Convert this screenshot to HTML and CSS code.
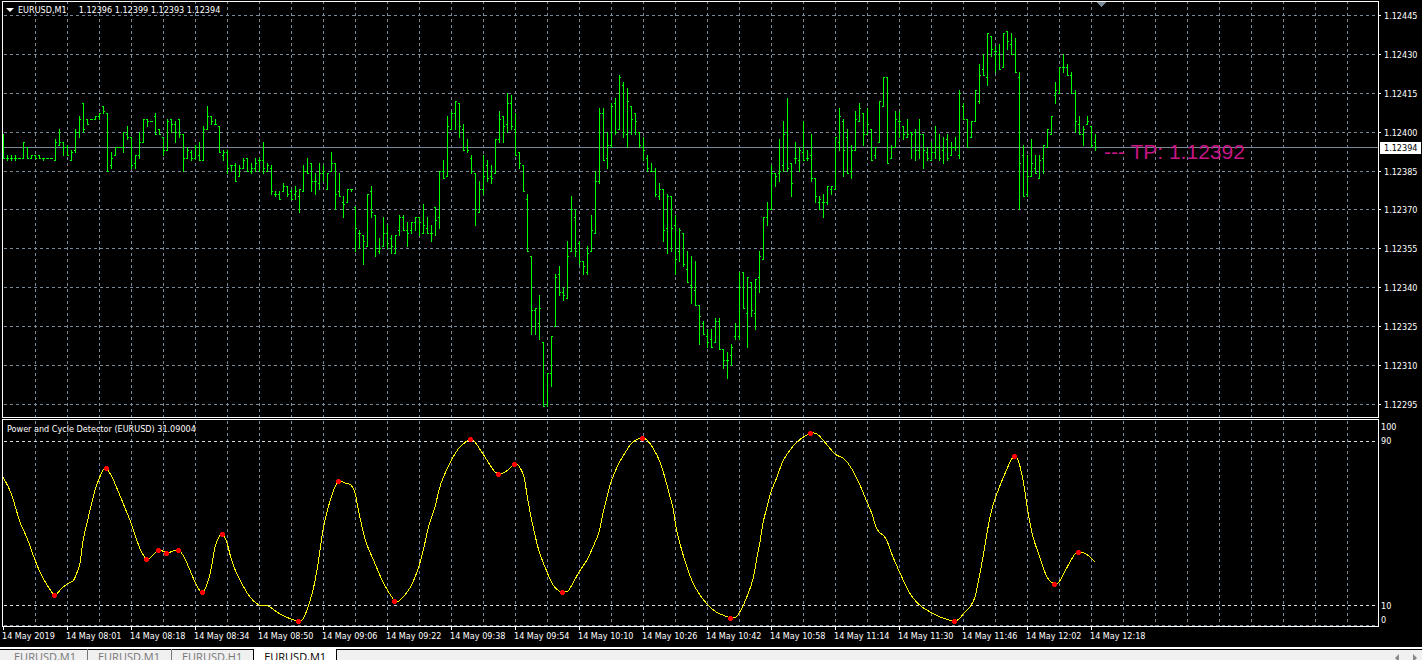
FILE: index.html
```
<!DOCTYPE html>
<html lang="en">
<head>
<meta charset="UTF-8">
<meta name="viewport" content="width=device-width, initial-scale=1.0">
<title>EURUSD,M1</title>
<link rel="stylesheet" href="styles.css">
</head>
<body>

<div class="terminal">
    <div class="charts">
        <div class="pane">
            <div class="plot price-plot">
                <svg class="canvas" id="priceChart" role="img" aria-label="EURUSD M1 bar chart"></svg>
                <div class="pane-title">
                    <svg class="arrow" width="8" height="4" viewBox="0 0 8 4"><path d="M0 0h8L4 4z" fill="#fff"/></svg>
                    <span>EURUSD,M1</span>
                    <span class="quotes">1.12396 1.12399 1.12393 1.12394</span>
                </div>
            </div>
            <div class="scale price-scale">
                <span>1.12445</span>
                <span>1.12430</span>
                <span>1.12415</span>
                <span>1.12400</span>
                <span>1.12385</span>
                <span>1.12370</span>
                <span>1.12355</span>
                <span>1.12340</span>
                <span>1.12325</span>
                <span>1.12310</span>
                <span>1.12295</span>
                <div class="price-tag">1.12394</div>
            </div>
        </div>
        <div class="pane">
            <div class="plot cycle-plot">
                <svg class="canvas" id="cycleChart" role="img" aria-label="Power and Cycle Detector"></svg>
                <div class="pane-title cycle-title">Power and Cycle Detector (EURUSD) 31.09004</div>
            </div>
            <div class="scale cycle-scale">
                <div><span>100</span><span>90</span></div>
                <div><span>10</span><span>0</span></div>
            </div>
        </div>
        <div class="time-scale">
            <span>14 May 2019</span>
            <span>14 May 08:01</span>
            <span>14 May 08:18</span>
            <span>14 May 08:34</span>
            <span>14 May 08:50</span>
            <span>14 May 09:06</span>
            <span>14 May 09:22</span>
            <span>14 May 09:38</span>
            <span>14 May 09:54</span>
            <span>14 May 10:10</span>
            <span>14 May 10:26</span>
            <span>14 May 10:42</span>
            <span>14 May 10:58</span>
            <span>14 May 11:14</span>
            <span>14 May 11:30</span>
            <span>14 May 11:46</span>
            <span>14 May 12:02</span>
            <span>14 May 12:18</span>
        </div>
    </div>
    <div class="tabs">
        <button class="tab">EURUSD,M1</button>
        <button class="tab">EURUSD,M1</button>
        <button class="tab">EURUSD,H1</button>
        <button class="tab active">EURUSD,M1</button>
        <div class="tab-scroll">
            <button aria-label="Previous tab"><svg width="4" height="8" viewBox="0 0 4 8"><path d="M4 0v8L0 4z" fill="#888"/></svg></button>
            <button aria-label="Next tab"><svg width="4" height="8" viewBox="0 0 4 8"><path d="M0 0v8l4-4z" fill="#888"/></svg></button>
        </div>
    </div>
</div>

<script src="chart.js"></script>
</body>
</html>
```
FILE: styles.css
```
body {
    margin: 0;
    background-color: #000;
    color: #fff;
    font-family: "DejaVu Sans Condensed", "Open Sans", sans-serif;
    font-size: 9px;
    line-height: 12px;
}
.terminal {
    display: flex;
    flex-direction: column;
    height: 100vh;
    overflow: hidden;
}
.charts {
    display: flex;
    flex-direction: column;
    flex: none;
    gap: 1px;
    padding: 1px 0 0 2px;
}
.pane {
    display: flex;
}
.plot {
    position: relative;
    flex: 1;
    min-width: 0;
    border: 1px solid #fff;
}
.price-plot {
    height: 415px;
}
.cycle-plot {
    height: 206px;
}
.canvas {
    display: block;
    width: 100%;
    height: 100%;
    shape-rendering: crispEdges;
}
.pane-title {
    position: absolute;
    top: 2px;
    left: 3px;
    display: flex;
    align-items: center;
    white-space: nowrap;
}
.cycle-title {
    top: 3px;
    left: 4px;
}
.arrow {
    margin-right: 4px;
}
.quotes {
    margin-left: 12px;
}
.scale {
    position: relative;
    box-sizing: border-box;
    display: flex;
    flex-direction: column;
    justify-content: space-between;
    width: 43px;
}
.price-scale {
    padding: 9px 0 7px 5px;
}
.price-scale span::before {
    content: "";
    float: left;
    width: 2px;
    height: 1px;
    margin: 5px 0 0 -5px;
    background-color: #fff;
}
.price-tag {
    position: absolute;
    top: 141px;
    left: 1px;
    right: 1px;
    padding-left: 4px;
    background-color: #fff;
    color: #000;
}
.cycle-scale {
    padding: 2px 0 1px 2px;
}
.cycle-scale div {
    display: flex;
    flex-direction: column;
    gap: 2px;
}
.time-scale {
    display: flex;
    height: 20px;
    margin-top: -1px;
    overflow: hidden;
    white-space: nowrap;
}
.time-scale span {
    flex: none;
    width: 64px;
    padding-top: 3px;
}
.time-scale span::before {
    content: "";
    display: block;
    width: 1px;
    height: 3px;
    margin: -3px 0 0 1px;
    background-color: #fff;
}
.tabs {
    display: flex;
    flex: 1;
    min-height: 12px;
    padding-left: 3px;
    border-top: 2px solid #fff;
    background-color: #f0f0f0;
    box-shadow: inset 0 1px #000;
}
.tab {
    display: flex;
    padding: 1px 11px 0;
    border: 0;
    background: none;
    color: #777;
    font-family: "Open Sans", sans-serif;
    font-size: 11px;
    line-height: 14px;
}
.tab + .tab {
    box-shadow: inset 1px 0 #777;
}
.tab + .tab.active {
    background-color: #fff;
    box-shadow: inset 1px 0 #000, inset -1px 0 #000;
    color: #000;
}
.tab-scroll {
    display: flex;
    align-items: flex-start;
    gap: 14px;
    margin-left: auto;
    padding: 5px 5px 0 0;
}
.tab-scroll button {
    display: flex;
    padding: 0;
    border: 0;
    background: none;
}
.grid {
    stroke: #778899;
    stroke-dasharray: 3 3;
}
.level {
    stroke: #dcdcdc;
    stroke-dasharray: 3 3;
}
.price-line {
    stroke: #778899;
}
.shift-mark {
    fill: #778899;
}
.bars {
    fill: none;
    stroke: #00ff00;
}
.cycle {
    fill: none;
    stroke: #ffff00;
}
.signal {
    fill: #ff0000;
}
.target {
    fill: #c71585;
    font-family: "Liberation Sans", Arial, sans-serif;
    font-size: 21px;
}
```
FILE: chart.js
```
const STEP = 4;
const GRID_STEP = 32;

// open high low close, points above 1.12000
const bars = `
399 399 390 390,390 391 389 390,390 391 389 390,390 391 389 390,390 390 390 390,390 396 390 396,394 394 390 390,390 391 390 391,
391 391 390 390,391 391 390 390,390 390 389 390,390 390 390 390,390 390 390 390,389 397 389 396,395 401 395 396,396 396 391 394,
394 395 391 391,389 393 389 392,393 401 392 400,400 406 398 405,411 411 400 401,405 405 403 403,405 405 405 405,405 406 405 406,
406 407 405 407,410 410 407 408,407 407 385 385,387 392 386 390,391 394 391 394,394 394 394 394,394 400 392 400,399 402 397 398,
398 398 386 387,388 391 386 391,391 400 390 396,396 405 396 405,405 405 402 404,404 404 404 404,406 407 399 399,401 401 399 399,
398 398 391 393,393 405 393 404,405 405 400 403,403 404 396 400,405 405 398 399,399 399 385 390,390 394 390 393,392 393 389 390,
390 395 390 394,391 396 389 389,389 402 389 401,401 410 401 406,406 406 403 404,403 405 403 403,402 402 392 392,391 393 389 392,
392 393 384 386,387 387 385 387,387 388 381 381,383 387 383 386,386 390 386 389,390 390 385 385,385 388 384 386,386 390 385 388,
389 390 385 389,389 396 384 386,385 388 385 387,386 387 376 377,376 377 375 376,376 377 374 374,377 380 377 379,379 379 375 376,
377 378 374 374,376 379 374 377,375 378 369 378,377 387 377 385,385 390 384 384,388 388 377 381,381 384 376 381,380 388 378 384,
384 387 381 385,378 384 378 384,385 392 385 388,388 388 370 376,377 384 375 375,373 375 367 372,373 378 373 378,378 378 377 378,
371 371 354 363,361 362 355 361,360 360 349 358,356 376 356 376,377 379 367 369,368 368 352 355,354 359 353 355,356 367 356 361,
361 364 355 357,359 360 353 356,353 360 353 360,362 368 360 367,367 368 362 362,362 365 356 361,362 365 361 365,365 367 362 367,
367 367 360 365,361 372 361 364,363 367 361 361,361 364 358 361,371 371 360 366,367 385 363 385,385 389 382 382,383 406 383 402,
401 408 401 407,407 412 401 412,411 411 398 402,401 403 393 393,394 397 392 393,390 391 384 385,384 384 364 370,369 381 369 378,
378 391 376 383,387 389 381 382,383 387 380 382,384 397 384 397,397 408 396 405,406 406 396 402,403 415 400 411,411 414 401 402,
401 407 391 391,392 392 386 388,387 387 377 377,374 376 354 354,352 352 322 331,331 332 322 332,326 337 320 332,319 319 294 294,
295 307 294 307,307 321 302 321,325 345 325 344,345 348 337 338,338 340 335 337,336 358 336 352,354 375 354 370,367 370 352 354,
357 358 349 350,350 350 345 348,346 356 345 353,354 368 354 362,361 385 361 381,381 409 380 407,407 409 389 389,390 400 386 395,
395 411 394 410,411 413 399 400,401 422 401 421,418 419 398 400,399 417 394 412,410 410 399 405,407 407 399 404,400 400 394 395,
394 398 389 393,390 391 385 386,385 388 385 385,385 386 375 376,375 380 374 378,378 378 358 362,363 376 353 375,375 375 354 363,
364 368 345 351,354 363 350 362,361 361 348 349,347 354 342 342,341 352 334 340,339 350 333 333,333 333 318 329,326 327 322 322,
321 324 317 319,320 324 317 317,319 328 319 327,327 328 316 316,316 316 309 312,312 315 305 312,314 318 310 317,321 326 320 325,
321 346 320 340,346 346 332 332,330 344 317 344,342 342 329 331,330 343 324 343,344 354 338 352,351 367 351 367,367 373 364 370,
370 387 370 384,384 384 379 383,384 397 381 385,387 404 385 399,400 413 385 386,388 388 375 380,390 396 388 390,389 394 385 393,
392 404 389 389,390 393 389 390,391 399 381 382,382 382 373 375,373 375 370 374,373 376 367 373,373 379 372 379,378 379 376 379,
378 398 378 398,396 409 393 406,404 405 383 393,398 401 384 384,385 395 382 393,393 408 393 405,404 411 404 409,407 407 395 399,
399 409 399 403,401 401 389 389,391 394 390 394,396 412 396 412,410 421 410 421,421 421 388 388,390 395 390 394,394 408 394 405,
404 408 398 404,402 402 397 399,398 405 398 399,400 400 390 399,400 401 389 393,393 405 390 399,399 399 386 393,392 394 389 390,
389 396 389 392,392 402 390 394,394 399 389 390,393 398 388 394,397 399 389 390,391 396 391 394,394 398 393 394,391 416 390 415,
410 411 405 405,405 405 394 394,398 404 398 404,404 416 404 416,412 426 411 422,424 430 422 422,421 438 418 438,437 437 429 432,
431 433 423 431,430 434 424 424,425 438 425 438,439 439 432 435,434 438 430 430,430 436 423 423,421 423 370 388,391 395 375 375,
376 391 375 383,383 397 383 388,386 391 384 384,382 391 382 389,390 395 384 395,394 401 394 401,399 406 399 406,414 419 411 416,
415 425 415 425,425 430 423 425,425 426 422 422,422 423 415 415,415 416 400 404,403 406 399 399,399 402 395 401,403 406 403 404,
402 402 394 395,396 399 393 394`.split(',').map(b => b.trim().split(' ').map(Number));

const cycle = [
    [0,57],[8,73],[17,102],[24,118],[32,140],[38,154],[46,168],[52,175],[58,169],[64,164],[70,161],[73,155],[77,143],
    [80,121],[84,103],[88,86],[92,70],[96,59],[100,50],[104,48],[106,52],[110,59],[120,83],[128,103],[132,115],[138,131],
    [144,139],[149,136],[156,130],[164,133],[170,131],[176,130],[182,139],[192,162],[197,171],[200,172],[203,167],[206,158],
    [209,144],[212,127],[216,117],[220,114],[224,123],[228,138],[233,152],[239,164],[247,177],[256,185],[265,186],[277,194],
    [288,199],[296,201],[300,199],[305,187],[310,170],[314,150],[317,130],[320,110],[324,92],[328,78],[332,67],[336,61],
    [342,63],[348,65],[352,73],[356,93],[360,111],[364,125],[370,139],[379,160],[385,171],[392,181],[397,180],[407,168],
    [412,157],[416,146],[421,127],[426,105],[432,87],[436,70],[440,58],[448,41],[456,28],[464,21],[468,19],[472,22],
    [480,34],[487,45],[492,52],[496,54],[500,53],[505,50],[510,45],[512,44],[516,46],[521,57],[524,75],[528,97],
    [532,115],[536,131],[544,152],[550,165],[556,171],[560,172],[565,171],[570,163],[576,152],[584,140],[590,127],[596,112],
    [600,93],[604,77],[608,62],[615,45],[622,33],[628,24],[635,19],[640,18],[644,20],[650,28],[657,42],[662,58],
    [666,73],[670,88],[673,107],[677,124],[684,147],[690,163],[697,175],[704,184],[713,192],[720,195],[728,198],[733,197],
    [738,190],[745,174],[750,159],[754,137],[757,122],[760,103],[764,87],[768,72],[774,57],[780,41],[787,30],[794,22],
    [802,16],[808,13],[814,14],[820,20],[832,34],[840,38],[847,46],[856,63],[864,82],[869,94],[873,107],[877,113],
    [880,115],[884,121],[890,137],[897,153],[904,168],[910,178],[919,187],[929,193],[937,197],[946,200],[952,201],[956,199],
    [961,193],[967,187],[972,177],[976,158],[980,137],[984,113],[988,93],[992,79],[998,63],[1004,49],[1008,40],[1012,36],
    [1016,43],[1020,60],[1023,79],[1026,98],[1030,117],[1036,135],[1041,150],[1046,160],[1052,164],[1056,162],[1061,153],
    [1067,142],[1072,134],[1076,132],[1081,133],[1086,136],[1092,142]
];

// turning points of the cycle line
const signals = [52, 104, 144, 156, 164, 176, 200, 220, 296, 336, 392, 468, 496, 512, 560, 640, 728, 808, 952, 1012, 1052, 1076];

function priceY(points) {
    return 13 + Math.round((445 - points) * 2.592);
}

function hLine(cls, y) {
    return `<line class="${cls}" x1="1" x2="100%" y1="${y + 0.5}" y2="${y + 0.5}"/>`;
}

function vGrid(width, top) {
    let out = '';
    for (let x = GRID_STEP; x < width; x += GRID_STEP) {
        out += `<line class="grid" x1="${x + 0.5}" x2="${x + 0.5}" y1="${top}" y2="100%"/>`;
    }
    return out;
}

// smooth curve through all points
function curve(points) {
    let d = `M${points[0]}`;
    for (let i = 0; i < points.length - 1; i++) {
        const p0 = points[i - 1] || points[i];
        const p1 = points[i];
        const p2 = points[i + 1];
        const p3 = points[i + 2] || p2;
        d += `C${p1[0] + (p2[0] - p0[0]) / 6} ${p1[1] + (p2[1] - p0[1]) / 6}`;
        d += ` ${p2[0] - (p3[0] - p1[0]) / 6} ${p2[1] - (p3[1] - p1[1]) / 6} ${p2[0]} ${p2[1]}`;
    }
    return d;
}

function drawPrice() {
    const svg = document.getElementById('priceChart');
    let out = vGrid(svg.clientWidth, -1);
    for (let p = 445; p >= 295; p -= 15) {
        out += hLine('grid', priceY(p));
    }
    out += hLine('price-line', priceY(394));

    let d = '';
    bars.forEach(([open, high, low, close], i) => {
        const x = i * STEP;
        d += `M${x + 0.5} ${priceY(high)}V${priceY(low) + 1}`;
        d += `M${x - 1} ${priceY(open) + 0.5}h1M${x + 1} ${priceY(close) + 0.5}h1`;
    });
    out += `<path class="bars" d="${d}"/>`;
    out += '<path class="shift-mark" d="M1093 0h10l-5 5z"/>';
    out += '<text class="target" x="1101" y="157">--- TP: 1.12392</text>';
    svg.innerHTML = out;
}

function drawCycle() {
    const svg = document.getElementById('cycleChart');
    let out = vGrid(svg.clientWidth, 1);
    out += hLine('level', 21) + hLine('level', 185) + hLine('grid', 205);
    out += `<path class="cycle" d="${curve(cycle)}"/>`;
    signals.forEach(s => {
        const [x, y] = cycle.find(p => p[0] === s);
        out += `<path class="signal" d="M${x - 2} ${y - 2}h3v1h1v3h-1v1h-3v-1h-1v-3h1z"/>`;
    });
    svg.innerHTML = out;
}

function draw() {
    drawPrice();
    drawCycle();
}

window.addEventListener('resize', draw);
draw();
```
